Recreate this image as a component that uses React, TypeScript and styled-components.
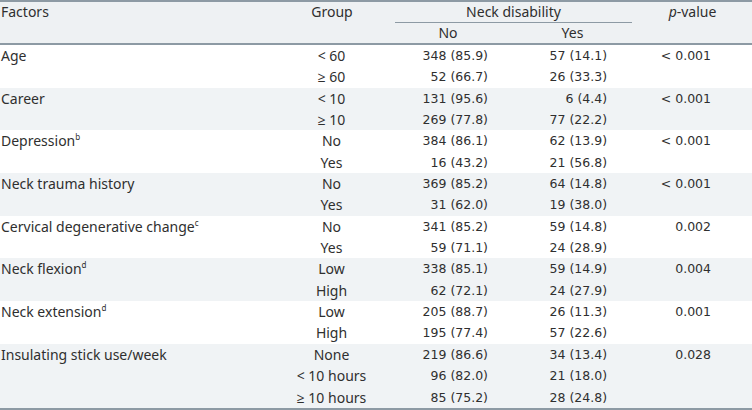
import React from 'react';
import styled, { createGlobalStyle } from 'styled-components';

type Row = { group: string; no: string; yes: string };
type Factor = { name: string; sup?: string; p: string; rows: Row[] };

const factors: Factor[] = [
  {
    name: 'Age',
    p: '< 0.001',
    rows: [
      { group: '< 60', no: '348 (85.9)', yes: '57 (14.1)' },
      { group: '≥ 60', no: '52 (66.7)', yes: '26 (33.3)' },
    ],
  },
  {
    name: 'Career',
    p: '< 0.001',
    rows: [
      { group: '< 10', no: '131 (95.6)', yes: '6 (4.4)' },
      { group: '≥ 10', no: '269 (77.8)', yes: '77 (22.2)' },
    ],
  },
  {
    name: 'Depression',
    sup: 'b',
    p: '< 0.001',
    rows: [
      { group: 'No', no: '384 (86.1)', yes: '62 (13.9)' },
      { group: 'Yes', no: '16 (43.2)', yes: '21 (56.8)' },
    ],
  },
  {
    name: 'Neck trauma history',
    p: '< 0.001',
    rows: [
      { group: 'No', no: '369 (85.2)', yes: '64 (14.8)' },
      { group: 'Yes', no: '31 (62.0)', yes: '19 (38.0)' },
    ],
  },
  {
    name: 'Cervical degenerative change',
    sup: 'c',
    p: '0.002',
    rows: [
      { group: 'No', no: '341 (85.2)', yes: '59 (14.8)' },
      { group: 'Yes', no: '59 (71.1)', yes: '24 (28.9)' },
    ],
  },
  {
    name: 'Neck flexion',
    sup: 'd',
    p: '0.004',
    rows: [
      { group: 'Low', no: '338 (85.1)', yes: '59 (14.9)' },
      { group: 'High', no: '62 (72.1)', yes: '24 (27.9)' },
    ],
  },
  {
    name: 'Neck extension',
    sup: 'd',
    p: '0.001',
    rows: [
      { group: 'Low', no: '205 (88.7)', yes: '26 (11.3)' },
      { group: 'High', no: '195 (77.4)', yes: '57 (22.6)' },
    ],
  },
  {
    name: 'Insulating stick use/week',
    p: '0.028',
    rows: [
      { group: 'None', no: '219 (86.6)', yes: '34 (13.4)' },
      { group: '< 10 hours', no: '96 (82.0)', yes: '21 (18.0)' },
      { group: '≥ 10 hours', no: '85 (75.2)', yes: '28 (24.8)' },
    ],
  },
];

const GlobalStyle = createGlobalStyle`
  body {
    margin: 0;
    background: #fff;
    font-family: "Noto Sans", "Open Sans", sans-serif;
    color: #2f2f2f;
  }
`;

const Table = styled.table`
  width: 752px;
  border-collapse: collapse;
  table-layout: fixed;
  border-top: 2px solid #8d9aa4;
  border-bottom: 2px solid #8d9aa4;
  font-size: 14px;
`;

const Head = styled.thead`
  background: #eef1f3;
  border-bottom: 2px solid #8d9aa4;
`;

const HeadCell = styled.th<{ $align?: string }>`
  font-weight: 400;
  text-align: ${(p) => p.$align || 'center'};
  vertical-align: top;
  height: 20px;
  line-height: 20px;
  padding: 0 0 0 1px;
`;

const SpanTitle = styled.div`
  margin-left: 11px;
  height: 20px;
  border-bottom: 1px solid #8d9aa4;
`;

const Body = styled.tbody<{ $shade: boolean }>`
  background: ${(p) => (p.$shade ? '#f0f3f5' : '#fff')};
`;

const DataRow = styled.tr`
  height: 21.35px;
`;

const Cell = styled.td`
  height: 21.35px;
  line-height: 21px;
  padding: 0;
  vertical-align: top;
  white-space: nowrap;
  overflow: hidden;
`;

const FactorCell = styled(Cell)`
  padding-left: 1px;
`;

const GroupCell = styled(Cell)`
  text-align: center;
`;

const NumCell = styled(Cell)<{ $pad: number }>`
  text-align: right;
  padding-right: ${(p) => p.$pad}px;
  font-family: "DejaVu Sans", sans-serif;
  font-size: 12.5px;
`;

const Sup = styled.span`
  font-size: 8px;
  line-height: 0;
  position: relative;
  top: -6px;
`;

export default function App() {
  return (
    <>
      <GlobalStyle />
      <Table>
        <colgroup>
          <col style={{ width: 280 }} />
          <col style={{ width: 103 }} />
          <col style={{ width: 129 }} />
          <col style={{ width: 120 }} />
          <col style={{ width: 120 }} />
        </colgroup>
        <Head>
          <tr>
            <HeadCell rowSpan={2} $align="left">
              Factors
            </HeadCell>
            <HeadCell rowSpan={2}>Group</HeadCell>
            <HeadCell colSpan={2}>
              <SpanTitle>Neck disability</SpanTitle>
            </HeadCell>
            <HeadCell rowSpan={2}>
              <i>p</i>-value
            </HeadCell>
          </tr>
          <tr>
            <HeadCell>No</HeadCell>
            <HeadCell>Yes</HeadCell>
          </tr>
        </Head>
        {factors.map((f, i) => (
          <Body key={f.name} $shade={i % 2 === 1}>
            {f.rows.map((r, j) => (
              <DataRow key={r.group}>
                <FactorCell>
                  {j === 0 && (
                    <>
                      {f.name}
                      {f.sup && <Sup>{f.sup}</Sup>}
                    </>
                  )}
                </FactorCell>
                <GroupCell>{r.group}</GroupCell>
                <NumCell $pad={24}>{r.no}</NumCell>
                <NumCell $pad={25}>{r.yes}</NumCell>
                <NumCell $pad={41}>{j === 0 ? f.p : ''}</NumCell>
              </DataRow>
            ))}
          </Body>
        ))}
      </Table>
    </>
  );
}
